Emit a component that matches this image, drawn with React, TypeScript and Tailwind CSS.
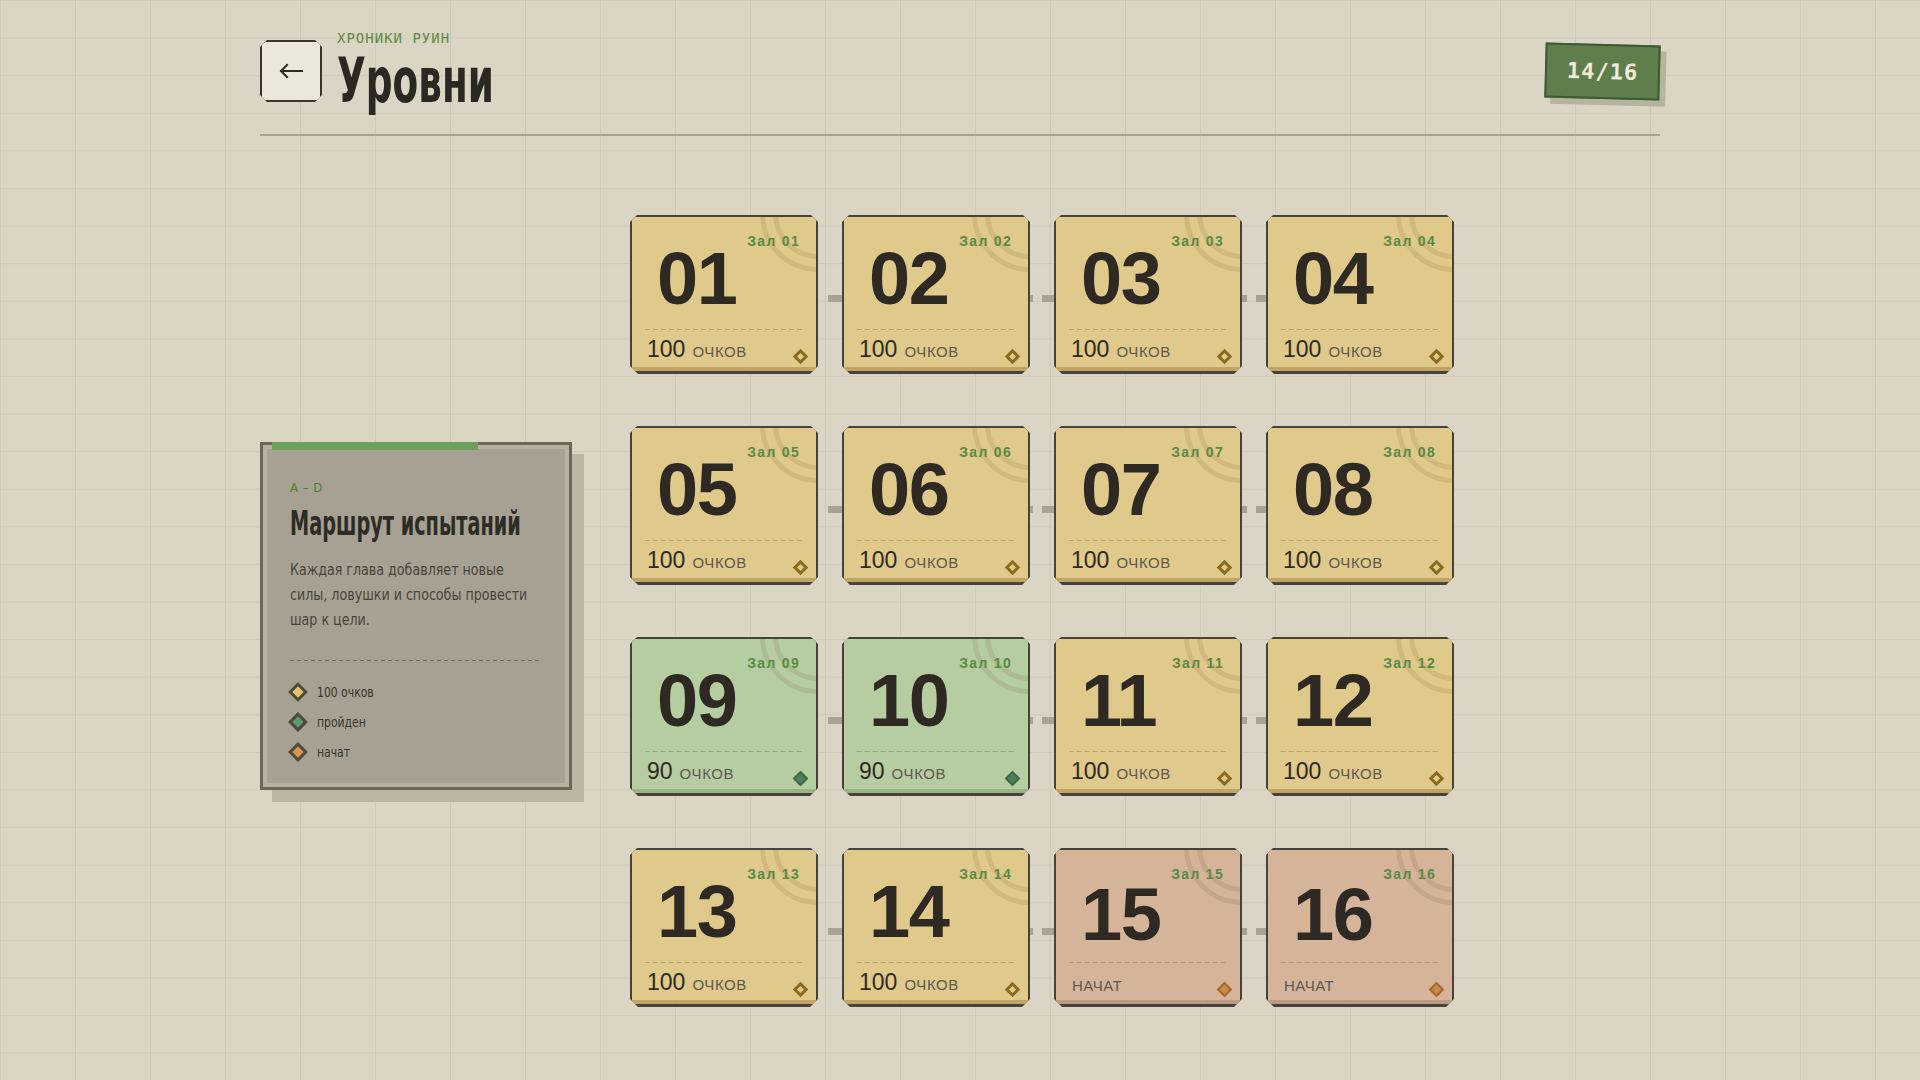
type Status = "score" | "done" | "started";

interface Level {
  id: string;
  status: Status;
  points?: number;
}

const levels: Level[] = Array.from({ length: 16 }, (_, i) => {
  const n = i + 1;
  const id = String(n).padStart(2, "0");
  if (n === 9 || n === 10) return { id, status: "done", points: 90 };
  if (n >= 15) return { id, status: "started" };
  return { id, status: "score", points: 100 };
});

const themes: Record<Status, { face: string; strip: string; dash: string; diamond: string }> = {
  score: {
    face: "bg-[#dfc98b]",
    strip: "border-b-[#bea565]",
    dash: "bg-[repeating-linear-gradient(90deg,#b9a373_0_5px,transparent_5px_8px)]",
    diamond: "border-[3px] border-[#8b6c1f]",
  },
  done: {
    face: "bg-[#b6cda1]",
    strip: "border-b-[#9bb486]",
    dash: "bg-[repeating-linear-gradient(90deg,#94ab81_0_5px,transparent_5px_8px)]",
    diamond: "border-2 border-[#3d6945] bg-[#4f8159]",
  },
  started: {
    face: "bg-[#d5b49a]",
    strip: "border-b-[#ba9b83]",
    dash: "bg-[repeating-linear-gradient(90deg,#b09784_0_5px,transparent_5px_8px)]",
    diamond: "border-2 border-[#a5672c] bg-[#c98a47]",
  },
};

// dashed link pieces drawn in the gaps between cards of a row
const links = [
  "bg-[linear-gradient(90deg,transparent_0_10px,#a8a494_10px_100%)]",
  "bg-[linear-gradient(90deg,#a8a494_0_3px,transparent_3px_12px,#a8a494_12px_100%)]",
  "bg-[linear-gradient(90deg,#a8a494_0_5px,transparent_5px_14px,#a8a494_14px_100%)]",
];

function LevelCard({ level }: { level: Level }) {
  const t = themes[level.status];
  return (
    <div className="h-[159px] w-[188px] shrink-0 bg-[#48423a] px-[2px] pt-[2px] pb-[3px] [clip-path:polygon(7px_0,calc(100%-7px)_0,100%_7px,100%_calc(100%-8px),calc(100%-8px)_100%,8px_100%,0_calc(100%-8px),0_7px)]">
      <div
        className={`relative flex h-full flex-col overflow-hidden border-b-4 px-[13px] pt-[16px] pb-[7px] ${t.face} ${t.strip}`}
      >
        <span className="pointer-events-none absolute -right-[60px] -top-[61px] h-[116px] w-[116px] rounded-full border-[5px] border-[rgba(100,80,30,0.13)]" />
        <span className="pointer-events-none absolute -right-[47px] -top-[48px] h-[90px] w-[90px] rounded-full border-[5px] border-[rgba(100,80,30,0.13)]" />
        <div className="relative flex h-[16px] justify-end pr-[3px]">
          <span className="font-['Liberation_Sans',Arial,sans-serif] text-[14px] font-bold leading-[16px] tracking-[1.3px] text-[#5a8a45]">
            Зал {level.id}
          </span>
        </div>
        <div
          className={`relative pl-[12px] font-['Liberation_Sans',Arial,sans-serif] text-[74px] font-bold leading-none tracking-[-1.5px] text-[#2e2a23] ${
            level.status === "started" ? "-mt-[4px]" : "-mt-[7px]"
          }`}
        >
          {level.id}
        </div>
        <div className={`relative mt-auto h-px ${t.dash}`} />
        {level.status === "started" ? (
          <div className="relative mt-[8px] flex h-[22px] items-start font-['Liberation_Sans',Arial,sans-serif]">
            <span className="mt-[7px] pl-[3px] text-[15px] leading-none tracking-[0.5px] text-[#5d5850]">
              НАЧАТ
            </span>
            <span className={`-mr-[3px] mb-[-2px] ml-auto h-[11px] w-[11px] rotate-45 self-end ${t.diamond}`} />
          </div>
        ) : (
          <div className="relative mt-[8px] flex h-[22px] items-baseline pl-[2px] font-['Liberation_Sans',Arial,sans-serif]">
            <span className="text-[23px] leading-none text-[#2e2a23]">{level.points}</span>
            <span className="ml-[7px] text-[15px] uppercase leading-none tracking-[0.6px] text-[#5d5850]">
              очков
            </span>
            <span className={`-mr-[3px] mb-[-2px] ml-auto h-[11px] w-[11px] rotate-45 self-end ${t.diamond}`} />
          </div>
        )}
      </div>
    </div>
  );
}

function LegendItem({ fill, label }: { fill: string; label: string }) {
  return (
    <li className="flex h-[30px] items-center">
      <span className={`ml-[1px] h-[14px] w-[14px] shrink-0 rotate-45 border-[3px] border-[#4d493f] ${fill}`} />
      <span className="ml-[12px] origin-left scale-x-[0.86] whitespace-nowrap font-['DejaVu_Sans_Condensed','DejaVu_Sans',sans-serif] text-[14px] leading-none text-[#37332b]">
        {label}
      </span>
    </li>
  );
}

export default function App() {
  const rows = [0, 1, 2, 3].map((r) => levels.slice(r * 4, r * 4 + 4));
  return (
    <div className="min-h-screen w-full bg-[#dbd5c6] [background-image:linear-gradient(to_right,rgba(160,160,130,0.2)_1px,transparent_1px),linear-gradient(to_bottom,rgba(160,160,130,0.2)_1px,transparent_1px)] [background-size:75px_37.6px]">
      <div className="mx-auto w-[1400px] pt-[30px]">
        <header className="flex items-center">
          <button className="h-[62px] w-[62px] shrink-0 bg-[#3a362e] p-[2px] [clip-path:polygon(7px_0,calc(100%-7px)_0,100%_7px,100%_calc(100%-7px),calc(100%-7px)_100%,7px_100%,0_calc(100%-7px),0_7px)]">
            <span className="flex h-full w-full items-center justify-center bg-[#ece7db] text-[#2f2b24]">
              <svg width="26" height="16" viewBox="0 0 26 16" fill="none" stroke="currentColor" strokeWidth="2" strokeLinecap="square">
                <path d="M24 8H3" />
                <path d="M9 2L3 8l6 6" />
              </svg>
            </span>
          </button>
          <div className="ml-[15px] flex h-[82px] flex-col">
            <span className="font-['DejaVu_Sans_Mono',monospace] text-[14px] leading-[16px] tracking-[1px] text-[#5d8a3d]">
              ХРОНИКИ РУИН
            </span>
            <h1 className="mt-[4px] origin-left scale-x-[0.67] whitespace-nowrap font-['DejaVu_Sans_Condensed','DejaVu_Sans',sans-serif] text-[62px] font-bold leading-none text-[#2b2822]">
              Уровни
            </h1>
          </div>
          <div className="ml-auto flex h-[55px] w-[115px] rotate-[1.5deg] items-center justify-center border-2 border-[#3e5a33] bg-[#5f7e4c] font-['DejaVu_Sans_Mono',monospace] text-[22px] font-bold tracking-[1px] text-[#efeada] shadow-[6px_6px_0_#b4b49f]">
            14/16
          </div>
        </header>
        <div className="mt-[22px] h-[2px] bg-[#a6a394]" />

        <main className="mt-[79px] flex items-center">
          <aside className="relative mt-[10px] w-[312px] shrink-0 border-[3px] border-[#6b675a] bg-[#b7b2a4] p-[4px] shadow-[12px_12px_0_#bbb5a5]">
            <div className="absolute -top-[3px] left-[9px] h-[8px] w-[206px] bg-[#6b9f5a]" />
            <div className="bg-[#a7a194] px-[23px] pt-[31px] pb-[16px]">
              <div className="font-['DejaVu_Sans_Condensed','DejaVu_Sans',sans-serif] text-[13px] leading-[16px] tracking-[0.5px] text-[#557a31]">
                A – D
              </div>
              <h2 className="mt-[9px] origin-left scale-x-[0.63] whitespace-nowrap font-['DejaVu_Sans_Condensed','DejaVu_Sans',sans-serif] text-[34px] font-bold leading-[36px] text-[#2e2b25]">
                Маршрут испытаний
              </h2>
              <p className="mt-[16px] origin-left scale-x-[0.88] whitespace-nowrap font-['DejaVu_Sans_Condensed','DejaVu_Sans',sans-serif] text-[16px] leading-[25px] text-[#47433a]">
                Каждая глава добавляет новые
                <br />
                силы, ловушки и способы провести
                <br />
                шар к цели.
              </p>
              <div className="mt-[28px] h-px bg-[repeating-linear-gradient(90deg,#716d60_0_4px,transparent_4px_7px)]" />
              <ul className="mt-[16px]">
                <LegendItem fill="bg-[#dfc46e]" label="100 очков" />
                <LegendItem fill="bg-[#5e9a6a]" label="пройден" />
                <LegendItem fill="bg-[#d99350]" label="начат" />
              </ul>
            </div>
          </aside>

          <section className="ml-[58px] flex flex-col gap-[52px]">
            {rows.map((row, r) => (
              <div key={r} className="flex items-center">
                {row.map((level, c) => (
                  <div key={level.id} className="flex items-center">
                    <LevelCard level={level} />
                    {c < 3 && <div className={`mt-[8px] h-[7px] w-[24px] ${links[c]}`} />}
                  </div>
                ))}
              </div>
            ))}
          </section>
        </main>
      </div>
    </div>
  );
}
